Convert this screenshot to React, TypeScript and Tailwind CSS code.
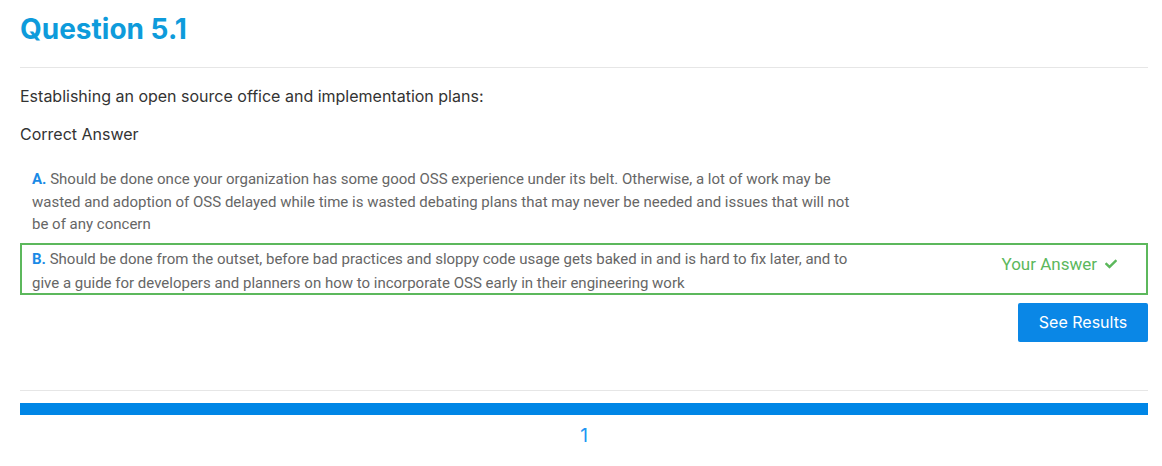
import React from "react";

function Check() {
  return (
    <svg width="14" height="12" viewBox="0 0 512 512" className="inline-block ml-[7px] -mt-[2px]" fill="#5cb85c">
      <path d="M173.9 439.4l-166.4-166.4c-10-10-10-26.2 0-36.2l36.2-36.2c10-10 26.2-10 36.2 0L192 312.7 432.1 72.6c10-10 26.2-10 36.2 0l36.2 36.2c10 10 10 26.2 0 36.2l-294.4 294.4c-10 10-26.2 10-36.2 0z" />
    </svg>
  );
}

export default function App() {
  return (
    <div className="bg-white w-[1162px] h-[466px] overflow-hidden" style={{ fontFamily: "Inter, 'Noto Sans', sans-serif" }}>
      <div className="ml-[20px] w-[1128px]">
        <h1 className="pt-[12px] text-[28px] leading-[34px] font-bold text-[#0e9bdb]">Question 5.1</h1>
        <div className="mt-[21px] border-t border-[#e6e6e6]" />
        <p className="mt-[16px] text-[16px] leading-[24px] text-[#333]">
          Establishing an open source office and implementation plans:
        </p>
        <p className="mt-[14px] text-[16px] leading-[24px] text-[#333]">Correct Answer</p>

        <div className="mt-[19px] flex flex-col gap-[4px]" style={{ fontFamily: "Roboto, 'Liberation Sans', sans-serif" }}>
          <div className="flex border-2 border-transparent px-[10px] py-px">
            <div className="w-[822px] text-[15px] leading-[22.5px] text-[#666]">
              <span className="font-bold text-[#1a8ae6]">A.</span> Should be done once your organization has some good OSS
              experience under its belt. Otherwise, a lot of work may be wasted and adoption of OSS delayed while time is
              wasted debating plans that may never be needed and issues that will not be of any concern
            </div>
          </div>
          <div className="flex h-[52px] justify-between border-2 border-[#5cb85c] px-[10px] pt-[2px]">
            <div className="w-[822px] text-[15px] leading-[24px] text-[#666]">
              <span className="font-bold text-[#1a8ae6]">B.</span> Should be done from the outset, before bad practices
              and sloppy code usage gets baked in and is hard to fix later, and to give a guide for developers and planners
              on how to incorporate OSS early in their engineering work
            </div>
            <div className="pt-[6px] pr-[18px] text-[17px] leading-[22px] text-[#5cb85c] whitespace-nowrap">
              Your Answer
              <Check />
            </div>
          </div>
        </div>

        <div className="mt-[8px] flex justify-end">
          <button className="h-[39px] w-[130px] rounded-[2px] bg-[#0a87e6] text-[16px] text-white">See Results</button>
        </div>

        <div className="mt-[48px] border-t border-[#e6e6e6]" />
        <div className="mt-[12px] h-[12px] bg-[#0086e6]" />
        <div className="mt-[9px] text-center text-[19px] leading-[24px] text-[#2196f3]">1</div>
      </div>
    </div>
  );
}
